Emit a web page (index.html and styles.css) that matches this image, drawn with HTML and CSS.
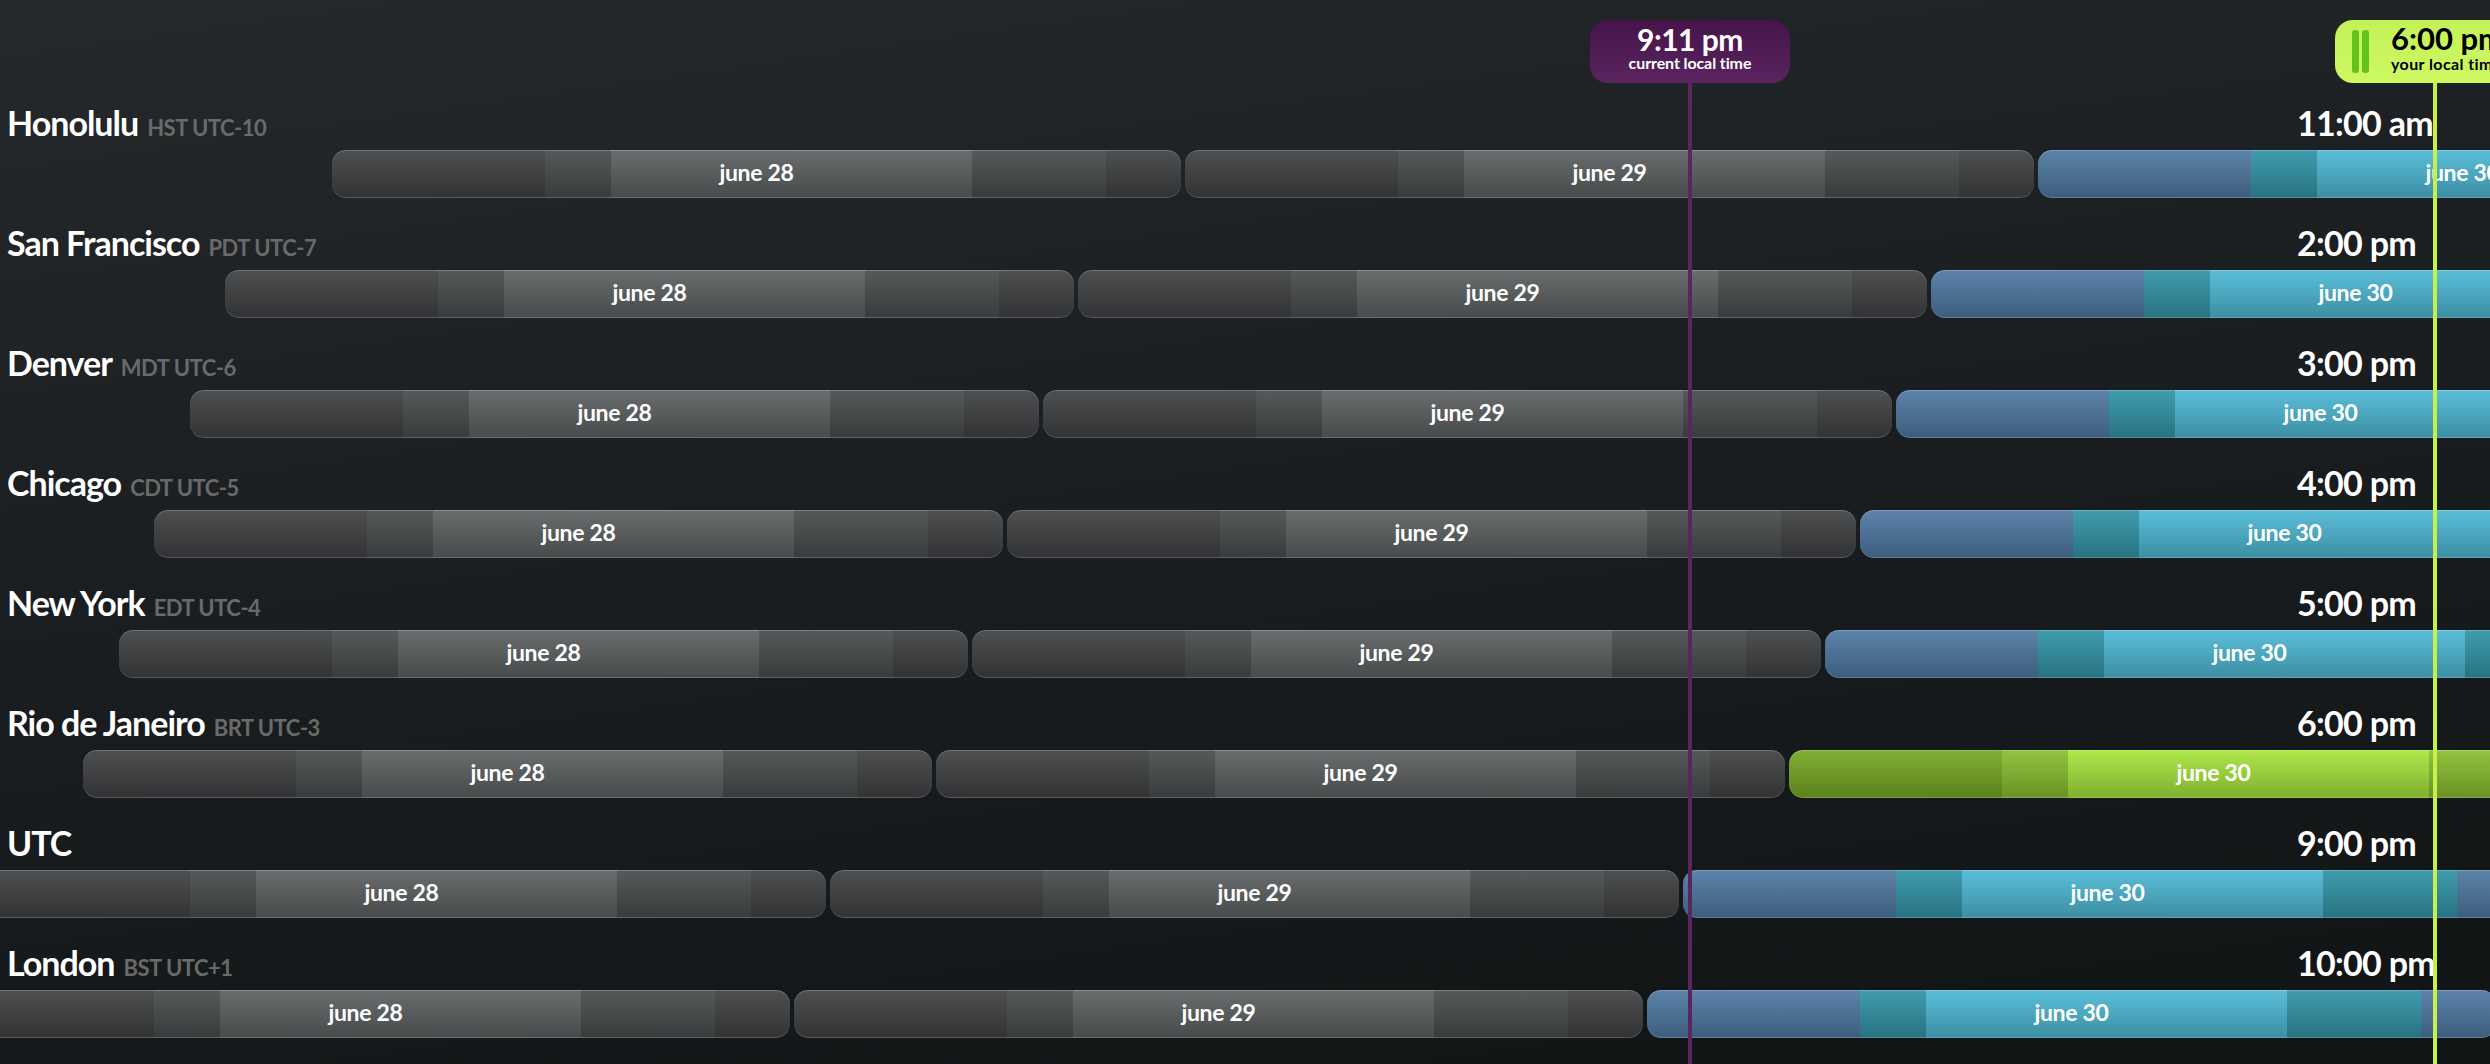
FILE: index.html
```html
<!DOCTYPE html>
<html lang="en">
<head>
<meta charset="utf-8">
<title>Time zones</title>
<link rel="stylesheet" href="styles.css">
</head>
<body>
<main class="zones">
  <section class="zone">
    <div class="zone-head"><div class="city">Honolulu<span class="tz">HST UTC-10</span></div><div class="clock">11:00 am</div></div>
    <div class="track"><div class="days" style="margin-left:332px">
      <div class="day grey">june 28</div><div class="day grey">june 29</div><div class="day blue">june 30</div><div class="day grey">july 1</div>
    </div></div>
  </section>
  <section class="zone">
    <div class="zone-head"><div class="city">San Francisco<span class="tz">PDT UTC-7</span></div><div class="clock">2:00 pm</div></div>
    <div class="track"><div class="days" style="margin-left:225px">
      <div class="day grey">june 28</div><div class="day grey">june 29</div><div class="day blue">june 30</div><div class="day grey">july 1</div>
    </div></div>
  </section>
  <section class="zone">
    <div class="zone-head"><div class="city">Denver<span class="tz">MDT UTC-6</span></div><div class="clock">3:00 pm</div></div>
    <div class="track"><div class="days" style="margin-left:190px">
      <div class="day grey">june 28</div><div class="day grey">june 29</div><div class="day blue">june 30</div><div class="day grey">july 1</div>
    </div></div>
  </section>
  <section class="zone">
    <div class="zone-head"><div class="city">Chicago<span class="tz">CDT UTC-5</span></div><div class="clock">4:00 pm</div></div>
    <div class="track"><div class="days" style="margin-left:154px">
      <div class="day grey">june 28</div><div class="day grey">june 29</div><div class="day blue">june 30</div><div class="day grey">july 1</div>
    </div></div>
  </section>
  <section class="zone">
    <div class="zone-head"><div class="city">New York<span class="tz">EDT UTC-4</span></div><div class="clock">5:00 pm</div></div>
    <div class="track"><div class="days" style="margin-left:119px">
      <div class="day grey">june 28</div><div class="day grey">june 29</div><div class="day blue">june 30</div><div class="day grey">july 1</div>
    </div></div>
  </section>
  <section class="zone">
    <div class="zone-head"><div class="city">Rio de Janeiro<span class="tz">BRT UTC-3</span></div><div class="clock">6:00 pm</div></div>
    <div class="track"><div class="days" style="margin-left:83px">
      <div class="day grey">june 28</div><div class="day grey">june 29</div><div class="day green">june 30</div><div class="day grey">july 1</div>
    </div></div>
  </section>
  <section class="zone">
    <div class="zone-head"><div class="city">UTC</div><div class="clock">9:00 pm</div></div>
    <div class="track"><div class="days" style="margin-left:-23px">
      <div class="day grey">june 28</div><div class="day grey">june 29</div><div class="day blue">june 30</div><div class="day grey">july 1</div>
    </div></div>
  </section>
  <section class="zone">
    <div class="zone-head"><div class="city">London<span class="tz">BST UTC+1</span></div><div class="clock">10:00 pm</div></div>
    <div class="track"><div class="days" style="margin-left:-59px">
      <div class="day grey">june 28</div><div class="day grey">june 29</div><div class="day blue">june 30</div><div class="day grey">july 1</div>
    </div></div>
  </section>
</main>

<div class="marker-line now-line"></div>
<div class="pill now-pill">
  <div class="pill-time">9:11 pm</div>
  <div class="pill-sub">current local time</div>
</div>

<div class="marker-line local-line"></div>
<div class="pill local-pill">
  <div class="pause"><span></span><span></span></div>
  <div class="local-text">
    <div class="pill-time">6:00 pm</div>
    <div class="pill-sub">your local time</div>
  </div>
</div>
</body>
</html>
```

FILE: styles.css
```css
* { box-sizing: border-box; }

html, body {
  margin: 0;
  padding: 0;
}

body {
  width: 2490px;
  height: 1064px;
  overflow: hidden;
  position: relative;
  background: linear-gradient(172deg, #26292b 0%, #1c1f21 40%, #111415 100%);
  font-family: Lato, "Noto Sans", sans-serif;
  color: #ffffff;
}

.zones {
  padding-top: 102px;
}

.zone {
  margin-bottom: 24px;
}

.zone-head {
  display: flex;
  justify-content: space-between;
  align-items: baseline;
  height: 42px;
  line-height: 42px;
  margin-bottom: 6px;
}

.city {
  padding-left: 7px;
  font-size: 34px;
  font-weight: 700;
  letter-spacing: -1px;
  white-space: nowrap;
}

.tz {
  margin-left: 9px;
  font-size: 22px;
  font-weight: 700;
  letter-spacing: -0.5px;
  color: #696a6a;
}

.clock {
  width: 193px;
  font-size: 34px;
  font-weight: 700;
  letter-spacing: -0.7px;
  white-space: nowrap;
}

.track {
  height: 48px;
  overflow: hidden;
}

.days {
  display: flex;
  gap: 4px;
}

.day {
  flex: 0 0 849px;
  height: 48px;
  border-radius: 14px;
  text-align: center;
  line-height: 44px;
  font-size: 23px;
  font-weight: 700;
  letter-spacing: -0.3px;
  color: #ffffff;
  box-shadow: inset 0 1px 0 rgba(255, 255, 255, 0.22), inset 0 -1px 0 rgba(255, 255, 255, 0.2);
  background:
    linear-gradient(to bottom, rgba(255, 255, 255, 0.07), rgba(0, 0, 0, 0.24)),
    linear-gradient(to right,
      var(--night) 0 213px,
      var(--twilight) 213px 279px,
      var(--light) 279px 640px,
      var(--twilight) 640px 774px,
      var(--night) 774px 849px);
}

.day.grey {
  --night: #414244;
  --twilight: #4a4d4e;
  --light: #5e6263;
}

.day.blue {
  --night: #507aa4;
  --twilight: #3396a9;
  --light: #4fbad6;
}

.day.green {
  --night: #78a926;
  --twilight: #8bbf30;
  --light: #a8e63d;
}

.marker-line {
  position: absolute;
  top: 83px;
  bottom: 0;
  width: 4px;
}

.now-line {
  left: 1688px;
  background: #5b2560;
}

.local-line {
  left: 2433px;
  background: #c6f04e;
}

.pill {
  position: absolute;
  top: 20px;
  width: 200px;
  height: 63px;
  border-radius: 18px;
}

.now-pill {
  left: 1590px;
  background: linear-gradient(to bottom, #46144a, #5a2460);
  display: flex;
  flex-direction: column;
  align-items: center;
  padding-top: 4px;
  color: #ffffff;
}

.pill-time {
  font-size: 30px;
  line-height: 30px;
  font-weight: 700;
  letter-spacing: -0.5px;
  white-space: nowrap;
}

.pill-sub {
  font-size: 16px;
  line-height: 17px;
  font-weight: 700;
  letter-spacing: -0.1px;
  white-space: nowrap;
}

.local-pill {
  left: 2335px;
  background: linear-gradient(to bottom, #c3f258, #cdf862);
  display: flex;
  align-items: flex-start;
  padding-left: 17px;
  color: #000000;
}

.pause {
  display: flex;
  gap: 3px;
  margin-top: 10px;
  height: 43px;
}

.pause span {
  width: 7px;
  height: 43px;
  border-radius: 3px;
  background: #63c21c;
}

.local-text {
  margin-left: 22px;
  padding-top: 3px;
}

.local-text .pill-time {
  font-size: 31px;
  line-height: 31px;
  letter-spacing: 0;
}

.local-text .pill-sub {
  font-size: 16px;
  line-height: 20px;
  letter-spacing: 0.4px;
}
```
